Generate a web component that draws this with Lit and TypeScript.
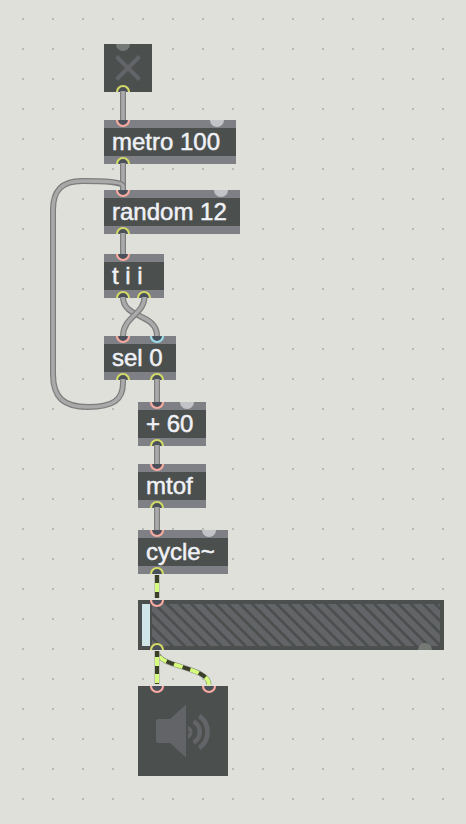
import { LitElement, html, svg, css } from "lit";
import { customElement, property } from "lit/decorators.js";
import { styleMap } from "lit/directives/style-map.js";

type Port = [x: number, kind: "hot" | "cold" | "out" | "mute"];

interface Item {
  kind: "box" | "toggle" | "gain" | "dac";
  x: number;
  y: number;
  w: number;
  h: number;
  label?: string;
  inlets: Port[];
  outlets: Port[];
}

const ITEMS: Item[] = [
  { kind: "toggle", x: 104, y: 44, w: 48, h: 48, inlets: [[19, "mute"]], outlets: [[19, "out"]] },
  { kind: "box", x: 104, y: 120, w: 132, h: 44, label: "metro 100", inlets: [[19, "hot"], [113, "mute"]], outlets: [[19, "out"]] },
  { kind: "box", x: 104, y: 190, w: 136, h: 44, label: "random 12", inlets: [[19, "hot"], [117, "mute"]], outlets: [[19, "out"]] },
  { kind: "box", x: 104, y: 254, w: 60, h: 44, label: "t i i", inlets: [[19, "hot"]], outlets: [[19, "out"], [40, "out"]] },
  { kind: "box", x: 104, y: 336, w: 72, h: 44, label: "sel 0", inlets: [[19, "hot"], [53, "cold"]], outlets: [[19, "out"], [53, "out"]] },
  { kind: "box", x: 138, y: 402, w: 68, h: 44, label: "+ 60", inlets: [[19, "hot"], [49, "mute"]], outlets: [[19, "out"]] },
  { kind: "box", x: 138, y: 464, w: 68, h: 44, label: "mtof", inlets: [[19, "hot"]], outlets: [[19, "out"]] },
  { kind: "box", x: 138, y: 530, w: 90, h: 44, label: "cycle~", inlets: [[19, "hot"], [71, "mute"]], outlets: [[19, "out"]] },
  { kind: "gain", x: 138, y: 600, w: 306, h: 50, inlets: [[19, "hot"]], outlets: [[19, "out"], [287, "mute"]] },
  { kind: "dac", x: 138, y: 686, w: 90, h: 90, inlets: [[19, "hot"], [71, "hot"]], outlets: [] },
];

const CONTROL_CORDS = [
  "M123 91V120",
  "M123 163V190",
  "M123 379V383C123 400 113 407 88 407C64 407 53 398 53 374V210C53 190 62 181 82 181C105 181 123 182 123 186V190",
  "M123 233V254",
  "M123 297C123 319 157 313 157 336",
  "M144.500 297C144.500 314 123 317 123 336",
  "M157 379V402",
  "M157 445V464",
  "M157 507V530",
];

const SIGNAL_CORDS = [
  { d: "M157 575V598", lead: 8 },
  { d: "M157 651C157 668 209 666 209 685", lead: 6 },
  { d: "M157 651V684", lead: 6 },
];

@customElement("patch-object")
export class PatchObject extends LitElement {
  @property({ attribute: false }) item!: Item;

  static styles = css`
    :host { display: block; width: 100%; height: 100%; }
    .body { position: relative; box-sizing: border-box; width: 100%; height: 100%; background: #4b4f4d; overflow: hidden; }
    .box { padding: 8px 0 8px 8px; background: linear-gradient(#7f8086 8px, #4b4f4d 8px 36px, #7f8086 36px); }
    .label { position: relative; z-index: 1; display: block; font: 24px/28px "Liberation Sans", Arial, sans-serif; color: #f0f1f6; white-space: pre; -webkit-text-stroke: 0.5px #f0f1f6; }
    .ports { position: absolute; left: 0; top: 0; display: block; }
    .glyph { display: block; }
    .ring { fill: #4a505a; stroke-width: 2.200; }
    .hot { stroke: #f9aaa0; }
    .cold { stroke: #9bdde8; }
    .out { stroke: #d3da66; }
    .mute { fill: #c2c3c7; }
    .toggle .mute, .gain .mute { fill: #757976; }
    .cross { stroke: #636468; stroke-width: 4; fill: none; }
    .lit { fill: #636468; }
    .wave { stroke: #636468; fill: none; }
    .bar { fill: #cfe5e7; }
    .stripe { stroke: #4b4f4d; stroke-width: 2.700; }
  `;

  private port([x, kind]: Port, y: number) {
    return kind === "mute"
      ? svg`<circle class="mute" cx=${x} cy=${y} r="7"></circle>`
      : svg`<circle class="ring ${kind}" cx=${x} cy=${y} r="6"></circle>`;
  }

  private glyph() {
    const { kind, w, h, label } = this.item;
    if (kind === "box") return html`<span class="label">${label}</span>`;
    const art =
      kind === "toggle"
        ? svg`<path class="cross" d="M12.500 12.500L35.500 35.500M35.500 12.500L12.500 35.500"></path>`
        : kind === "gain"
          ? svg`
            <defs><clipPath id="track"><rect x="14" y="4" width="288" height="42"></rect></clipPath></defs>
            <rect class="lit" x="14" y="4" width="288" height="42"></rect>
            <g clip-path="url(#track)">
              ${Array.from({ length: 30 }, (_, i) => svg`<path class="stripe" d="M${i * 12.2 - 36} 0l50 50"></path>`)}
            </g>
            <rect class="bar" x="4" y="4" width="8" height="42"></rect>`
          : svg`
            <path class="lit" d="M20 33H32L48 18.500V71.500L32 57H20Q18 57 18 55V35Q18 33 20 33Z"></path>
            <path class="lit" d="M50 40A6.600 6.600 0 0 1 50 52.500V47.500L52 46.500L50 45Z"></path>
            <path class="wave" stroke-width="4.400" d="M55.500 35.300A12.300 12.300 0 0 1 55.500 56.700"></path>
            <path class="wave" stroke-width="4.800" d="M61.200 30A19.500 19.500 0 0 1 61.200 62"></path>`;
    return html`<svg class="glyph" width=${w} height=${h}>${art}</svg>`;
  }

  render() {
    const { kind, w, h, inlets, outlets } = this.item;
    return html`<div class="body ${kind}">
      ${this.glyph()}
      <svg class="ports" width=${w} height=${h}>
        ${inlets.map((p) => this.port(p, 0))} ${outlets.map((p) => this.port(p, h))}
      </svg>
    </div>`;
  }
}

@customElement("app-root")
export class AppRoot extends LitElement {
  static styles = css`
    :host { display: block; }
    .patcher {
      position: relative;
      width: 466px;
      height: 824px;
      overflow: hidden;
      background: conic-gradient(from 0deg at 2px 2px, transparent 75%, #b9bab5 0) 22px 18px / 30px 30px, #dfe0da;
    }
    .node { position: absolute; }
    .cords { position: absolute; left: 0; top: 0; fill: none; }
    .edge { stroke: #7d7d7d; stroke-width: 6; }
    .core { stroke: #a9a9a9; stroke-width: 3.600; }
    .halo { stroke: #b4b5b0; stroke-width: 5.500; }
    .dark { stroke: #3a3f28; stroke-width: 4; }
    .dash { stroke: #d5fc7c; stroke-width: 4; stroke-dasharray: 9 8; }
  `;

  render() {
    return html`<main class="patcher">
      ${ITEMS.map(
        (item) => html`<div
          class="node"
          style=${styleMap({ left: `${item.x}px`, top: `${item.y}px`, width: `${item.w}px`, height: `${item.h}px` })}
        ><patch-object .item=${item}></patch-object></div>`,
      )}
      <svg class="cords" width="466" height="824">
        ${CONTROL_CORDS.map((d) => svg`<path class="edge" d=${d}></path><path class="core" d=${d}></path>`)}
        ${SIGNAL_CORDS.map(
          ({ d, lead }) => svg`<path class="halo" d=${d}></path><path class="dark" d=${d}></path>
            <path class="dash" d=${d} stroke-dashoffset=${17 - lead}></path>`,
        )}
      </svg>
    </main>`;
  }
}
